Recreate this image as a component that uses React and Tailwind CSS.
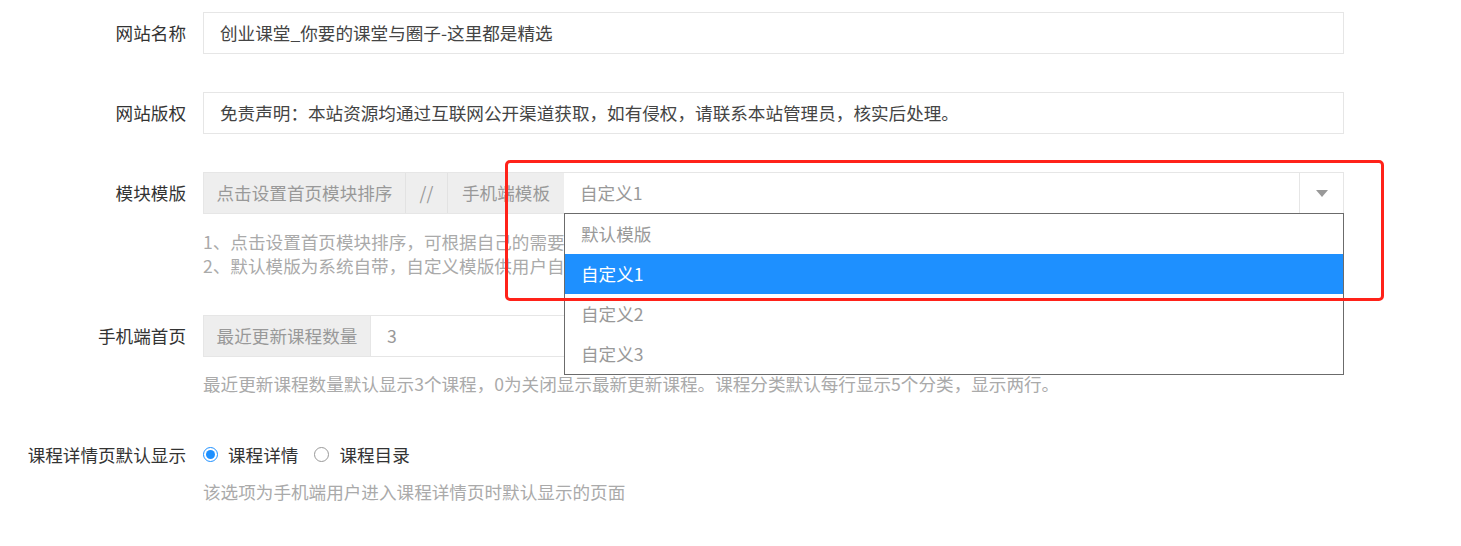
import React from 'react'

const font = { fontFamily: '"Noto Sans CJK SC", "Noto Sans", sans-serif' }

function Row({ label, children, className = '' }) {
  return (
    <div className={`flex items-start ${className}`}>
      <div className="w-[186px] shrink-0 h-[42px] flex items-center justify-end text-[#333] whitespace-nowrap">{label}</div>
      <div className="ml-[17px] w-[1141px]">{children}</div>
    </div>
  )
}

function Addon({ children, className = '' }) {
  return (
    <div className={`h-full flex items-center justify-center bg-[#eeeeee] text-[#999] whitespace-nowrap ${className}`}>{children}</div>
  )
}

export default function App() {
  const options = ['默认模版', '自定义1', '自定义2', '自定义3']
  return (
    <div className="relative w-[1461px] h-[546px] bg-white overflow-hidden text-[17.6px]" style={font}>
      <div className="pt-[12px] flex flex-col">
        <Row label="网站名称">
          <div className="h-[42px] border border-[#e6e6e6] flex items-center pl-[16px] text-[#444]">创业课堂_你要的课堂与圈子-这里都是精选</div>
        </Row>

        <Row label="网站版权" className="mt-[38px]">
          <div className="h-[42px] border border-[#e6e6e6] flex items-center pl-[16px] text-[#444]">免责声明：本站资源均通过互联网公开渠道获取，如有侵权，请联系本站管理员，核实后处理。</div>
        </Row>

        <Row label="模块模版" className="mt-[38px]">
          <div className="h-[42px] border border-[#e6e6e6] flex">
            <Addon className="w-[202px] border-r border-[#e2e2e2]">点击设置首页模块排序</Addon>
            <Addon className="w-[42px] border-r border-[#e2e2e2]">//</Addon>
            <Addon className="w-[116px]">手机端模板</Addon>
            <div className="relative flex-1 flex bg-white">
              <div className="flex-1 flex items-center pl-[16px] text-[#999]">自定义1</div>
              <div className="w-[44px] border-l border-[#e6e6e6] flex items-center justify-center">
                <svg width="12" height="7" viewBox="0 0 12 7"><path d="M0 0h12L6 7z" fill="#999" /></svg>
              </div>
              <div className="absolute left-0 -right-px top-[40px] z-10 bg-white border border-[#6b6b6b]">
                {options.map((o) => (
                  <div key={o} className={`h-[40px] flex items-center pl-[16px] ${o === '自定义1' ? 'bg-[#1e90ff] text-white' : 'text-[#999]'}`}>{o}</div>
                ))}
              </div>
            </div>
          </div>
          <div className="mt-[16px] text-[#aaa] leading-[24px]">
            <p>1、点击设置首页模块排序，可根据自己的需要调整首页模块的显示顺序。</p>
            <p>2、默认模版为系统自带，自定义模版供用户自行设计首页。</p>
          </div>
        </Row>

        <Row label="手机端首页" className="mt-[37px]">
          <div className="h-[42px] border border-[#e6e6e6] flex">
            <Addon className="w-[167px] border-r border-[#e6e6e6]">最近更新课程数量</Addon>
            <div className="flex-1 flex items-center pl-[16px] text-[#999]">3</div>
          </div>
          <div className="mt-[15px] text-[#aaa] leading-[24px]">最近更新课程数量默认显示3个课程，0为关闭显示最新更新课程。课程分类默认每行显示5个分类，显示两行。</div>
        </Row>

        <Row label="课程详情页默认显示" className="mt-[38px]">
          <div className="h-[42px] flex items-center text-[#333]">
            <label className="flex items-center">
              <span className="w-[15px] h-[15px] rounded-full border border-[#1e90ff] flex items-center justify-center">
                <span className="w-[9px] h-[9px] rounded-full bg-[#1e90ff]" />
              </span>
              <span className="ml-[10px]">课程详情</span>
            </label>
            <label className="flex items-center ml-[16px]">
              <span className="w-[15px] h-[15px] rounded-full border border-[#999]" />
              <span className="ml-[10px]">课程目录</span>
            </label>
          </div>
          <div className="mt-[4px] text-[#aaa] leading-[24px]">该选项为手机端用户进入课程详情页时默认显示的页面</div>
        </Row>
      </div>

      <div className="absolute left-[505px] top-[160px] w-[879px] h-[141px] border-[3px] border-[#ff2219] rounded-[5px] pointer-events-none z-20" />
    </div>
  )
}
